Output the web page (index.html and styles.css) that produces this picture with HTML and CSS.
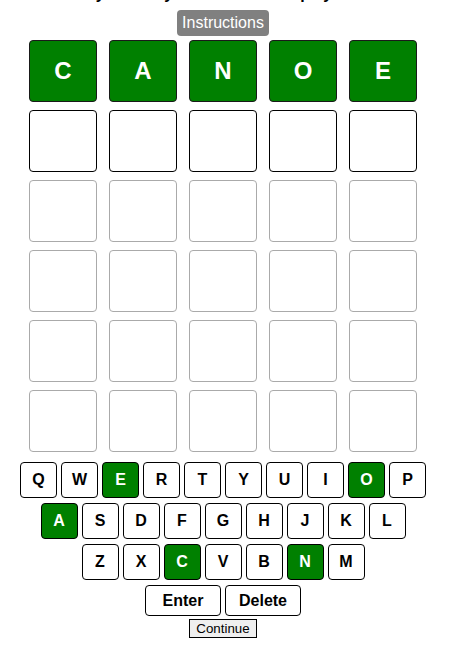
FILE: index.html
```html
<!DOCTYPE html>
<html lang="en">
<head>
<meta charset="utf-8">
<title>Wordle</title>
<link rel="stylesheet" href="styles.css">
</head>
<body>
<div class="page">
  <p class="message">Won today! Now try back at noon to play once more!</p>
  <button class="instructions">Instructions</button>
  <div class="board">
    <div class="tile correct">C</div><div class="tile correct">A</div><div class="tile correct">N</div><div class="tile correct">O</div><div class="tile correct">E</div>
    <div class="tile active"></div><div class="tile active"></div><div class="tile active"></div><div class="tile active"></div><div class="tile active"></div>
    <div class="tile"></div><div class="tile"></div><div class="tile"></div><div class="tile"></div><div class="tile"></div>
    <div class="tile"></div><div class="tile"></div><div class="tile"></div><div class="tile"></div><div class="tile"></div>
    <div class="tile"></div><div class="tile"></div><div class="tile"></div><div class="tile"></div><div class="tile"></div>
    <div class="tile"></div><div class="tile"></div><div class="tile"></div><div class="tile"></div><div class="tile"></div>
  </div>
  <div class="keyboard">
    <div class="key-row">
      <div class="key">Q</div><div class="key">W</div><div class="key correct">E</div><div class="key">R</div><div class="key">T</div><div class="key">Y</div><div class="key">U</div><div class="key">I</div><div class="key correct">O</div><div class="key">P</div>
    </div>
    <div class="key-row">
      <div class="key correct">A</div><div class="key">S</div><div class="key">D</div><div class="key">F</div><div class="key">G</div><div class="key">H</div><div class="key">J</div><div class="key">K</div><div class="key">L</div>
    </div>
    <div class="key-row">
      <div class="key">Z</div><div class="key">X</div><div class="key correct">C</div><div class="key">V</div><div class="key">B</div><div class="key correct">N</div><div class="key">M</div>
    </div>
    <div class="key-row">
      <div class="key wide">Enter</div><div class="key wide">Delete</div>
    </div>
  </div>
  <button class="continue">Continue</button>
</div>
</body>
</html>
```
FILE: styles.css
```css
html, body {
  margin: 0;
  padding: 0;
  background: #ffffff;
  overflow: hidden;
}

body {
  font-family: "Liberation Sans", Arial, sans-serif;
  color: #000;
}

.page {
  width: 446px;
  display: flex;
  flex-direction: column;
  align-items: center;
}

.message {
  margin: -15px 0 0 0;
  height: 18px;
  line-height: 18px;
  font-size: 16px;
  font-weight: bold;
  white-space: nowrap;
}

.instructions {
  margin-top: 7px;
  height: 26px;
  padding: 0 5px;
  border: none;
  border-radius: 4px;
  background: #808080;
  color: #ffffff;
  font-family: "Liberation Sans", Arial, sans-serif;
  font-size: 16px;
  line-height: 26px;
}

.board {
  margin-top: 4px;
  display: grid;
  grid-template-columns: repeat(5, 68px);
  grid-auto-rows: 62px;
  column-gap: 12px;
  row-gap: 8px;
}

.tile {
  box-sizing: border-box;
  border: 1px solid #aaaaaa;
  border-radius: 4px;
  display: flex;
  align-items: center;
  justify-content: center;
  font-size: 24px;
  font-weight: bold;
  color: #ffffff;
}

.tile.active {
  border-color: #000000;
}

.tile.correct {
  background: #008000;
  border-color: #1a1a1a;
}

.keyboard {
  margin-top: 10px;
  display: flex;
  flex-direction: column;
  align-items: center;
  gap: 5px;
}

.key-row {
  display: flex;
  gap: 4px;
}

.key {
  box-sizing: border-box;
  width: 37px;
  height: 36px;
  border: 1px solid #000000;
  border-radius: 4px;
  background: #ffffff;
  display: flex;
  align-items: center;
  justify-content: center;
  font-size: 16px;
  font-weight: bold;
  color: #000000;
}

.key.correct {
  background: #008000;
  color: #ffffff;
}

.key.wide {
  width: 76px;
  height: 31px;
}

.continue {
  margin-top: 3px;
  box-sizing: border-box;
  height: 19px;
  padding: 0 6px;
  border: 1px solid #000000;
  border-radius: 0;
  background: #efefef;
  color: #000000;
  font-family: "Liberation Sans", Arial, sans-serif;
  font-size: 13.333px;
  line-height: 17px;
}
```
